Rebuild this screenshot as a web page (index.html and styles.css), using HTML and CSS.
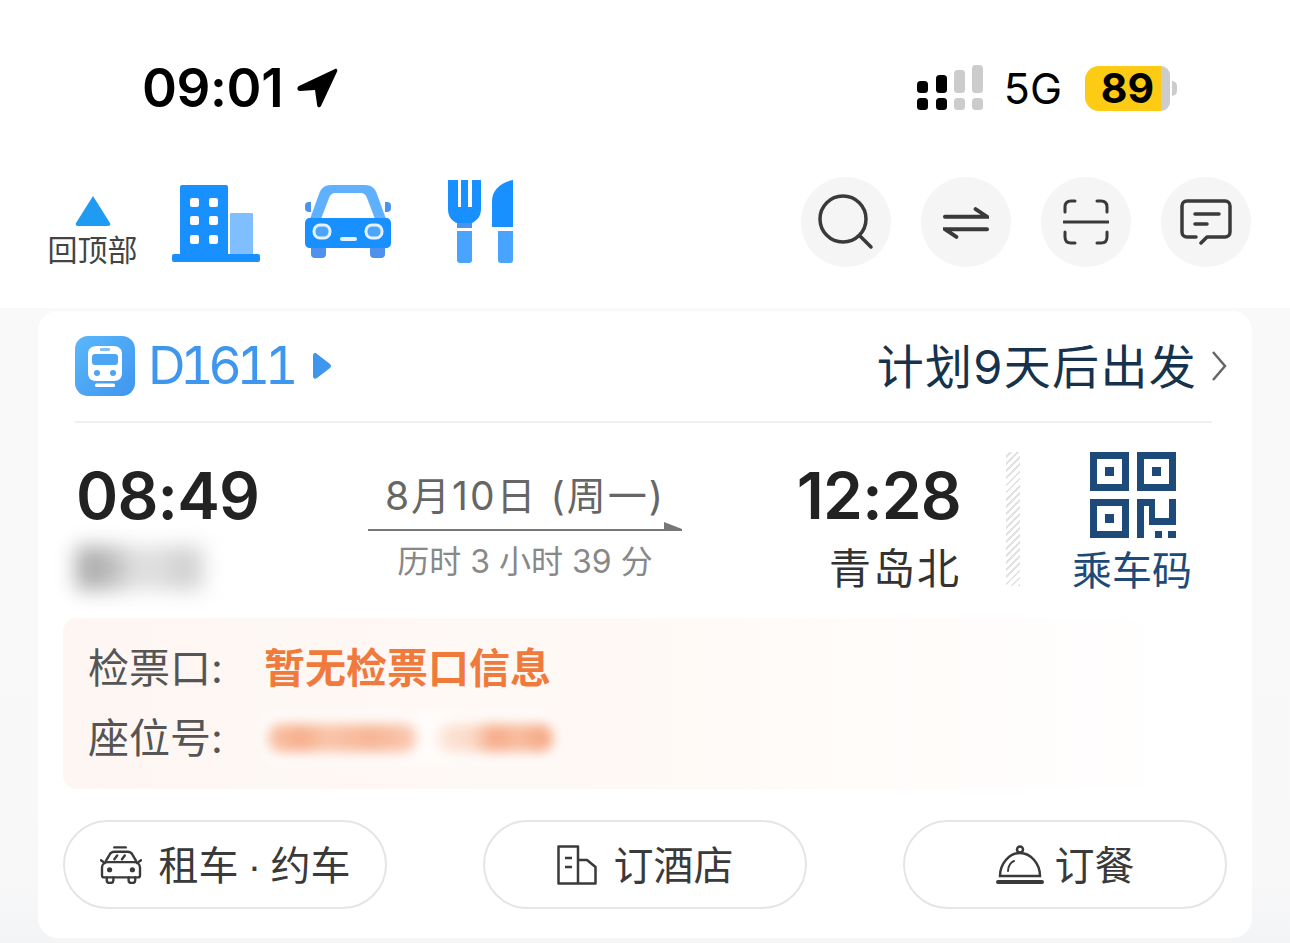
FILE: index.html
```html
<!DOCTYPE html>
<html lang="zh-CN">
<head>
    <meta charset="UTF-8">
    <meta name="viewport" content="width=device-width, initial-scale=1.0">
    <title>行程</title>
    <link rel="stylesheet" href="styles.css">
</head>
<body>
    <div class="status-bar">
        <div class="status-left">
            <span class="clock">09:01</span>
            <svg class="gps" viewBox="0 0 42 42" width="42" height="42"><path d="M2 19 38 2c1.500-.6 2.800.6 2.200 2.200L24 39c-1 2-3.500 1.700-3.800-.6L18 23 3 24c-3 0-3.500-3.600-1-5z" fill="#000"/></svg>
        </div>
        <div class="status-right">
            <svg class="signal" viewBox="0 0 66 46" width="66" height="46">
                <rect x="0" y="16" width="11" height="12" rx="3.500" fill="#000"/><rect x="0" y="33" width="11" height="12" rx="3.500" fill="#000"/>
                <rect x="19" y="10" width="11" height="18" rx="3.500" fill="#000"/><rect x="19" y="33" width="11" height="12" rx="3.500" fill="#000"/>
                <rect x="37" y="5" width="11" height="23" rx="3.500" fill="#ccc"/><rect x="37" y="33" width="11" height="12" rx="3.500" fill="#ccc"/>
                <rect x="55" y="0" width="11" height="28" rx="3.500" fill="#ccc"/><rect x="55" y="33" width="11" height="12" rx="3.500" fill="#ccc"/>
            </svg>
            <span class="network">5G</span>
            <div class="battery"><div class="battery-fill">89</div><div class="battery-rest"></div><div class="battery-tip"></div></div>
        </div>
    </div>

    <div class="nav">
        <div class="back-top">
            <svg viewBox="0 0 36 32" width="36" height="32"><path d="M18 1 35 28c.8 1.500 0 3-2 3H3c-2 0-2.800-1.500-2-3z" fill="#1f9cf2"/></svg>
            <span>回顶部</span>
        </div>
        <svg class="nav-hotel" viewBox="0 0 88 78" width="88" height="78">
            <rect x="8" y="0" width="48" height="72" rx="2" fill="#1890ff"/>
            <rect x="58" y="28" width="23" height="44" rx="1" fill="#7fbfff"/>
            <rect x="0" y="69" width="88" height="8" rx="2" fill="#1890ff"/>
            <g fill="#fff"><rect x="18" y="13" width="9" height="9" rx="2"/><rect x="37" y="13" width="9" height="9" rx="2"/><rect x="18" y="31" width="9" height="9" rx="2"/><rect x="37" y="31" width="9" height="9" rx="2"/><rect x="18" y="50" width="9" height="9" rx="2"/><rect x="37" y="50" width="9" height="9" rx="2"/></g>
        </svg>
        <svg class="nav-car" viewBox="0 0 86 74" width="86" height="74">
            <rect x="6" y="58" width="15" height="15" rx="4" fill="#4d93ee"/><rect x="65" y="58" width="15" height="15" rx="4" fill="#4d93ee"/>
            <rect x="0" y="17" width="86" height="10" rx="4" fill="#4d93ee"/>
            <rect x="0" y="0" width="86" height="17" fill="#fff"/>
            <rect x="6" y="17" width="74" height="17" fill="#fff"/>
            <path d="M5 34 14 9C16 3 20 0 26 0H60c6 0 10 3 12 9L81 34H70L62 13c-1-3-3-5-7-5H31c-4 0-6 2-7 5L16 34z" fill="#5fb1ff"/>
            <path d="M5 33H81c3 0 5 2 5 5V58c0 3-2 5-5 5H5c-3 0-5-2-5-5V38c0-3 2-5 5-5z" fill="#1890ff"/>
            <rect x="9" y="40" width="16" height="13" rx="6" fill="#4aa5fb" stroke="#e4f2ff" stroke-width="3"/>
            <rect x="61" y="40" width="16" height="13" rx="6" fill="#4aa5fb" stroke="#e4f2ff" stroke-width="3"/>
            <rect x="35" y="52" width="17" height="4" rx="2" fill="#e4f2ff"/>
        </svg>
        <svg class="nav-food" viewBox="0 0 68 86" width="68" height="86">
            <path d="M1 1H11V28H14V1H21V28H25V1H34V30C34 38 29 42 25 44H10C5 42 1 38 1 30z" fill="#1890ff"/>
            <path d="M10 44H25V49H10z" fill="#4d93ee"/>
            <path d="M10 52H25V81c0 2-1 3-3 3H13c-2 0-3-1-3-3z" fill="#48a4ff"/>
            <path d="M66 1V48H45V22C45 11 54 3 66 1z" fill="#1890ff"/>
            <path d="M51 52H66V81c0 2-1 3-3 3H54c-2 0-3-1-3-3z" fill="#48a4ff"/>
        </svg>
        <div class="nav-actions">
            <div class="round-btn"><svg viewBox="0 0 56 56" width="56" height="56"><circle cx="25" cy="25" r="23" fill="none" stroke="#3a3a3a" stroke-width="3.500"/><path d="M42 42 53 53" stroke="#3a3a3a" stroke-width="3.500" stroke-linecap="round"/></svg></div>
            <div class="round-btn"><svg viewBox="0 0 48 34" width="46" height="33" fill="none" stroke="#3a3a3a" stroke-width="4" stroke-linecap="round"><path d="M2 11H46L34 3"/><path d="M46 24H2L14 32"/></svg></div>
            <div class="round-btn"><svg viewBox="0 0 46 46" width="46" height="46" fill="none" stroke="#3a3a3a" stroke-width="3" stroke-linecap="round"><path d="M2 13V8c0-4 2-6 6-6h4M34 2h4c4 0 6 2 6 6v5M2 33v5c0 4 2 6 6 6h4M34 44h4c4 0 6-2 6-6v-5M1 23H45"/></svg></div>
            <div class="round-btn"><svg viewBox="0 0 52 46" width="52" height="46" fill="none" stroke="#3a3a3a" stroke-width="3.500" stroke-linecap="round" stroke-linejoin="round"><path d="M16 38H7c-3 0-5-2-5-5V7c0-3 2-5 5-5H45c3 0 5 2 5 5V33c0 3-2 5-5 5H27l-6 6"/><path d="M15 15H39M15 25H27"/></svg></div>
        </div>
    </div>

    <div class="page">
        <div class="card">
            <div class="card-head">
                <svg class="train-logo" viewBox="0 0 60 60" width="60" height="60">
                    <defs><linearGradient id="tg" x1="0" y1="0" x2="1" y2="1"><stop offset="0" stop-color="#5ab8fb"/><stop offset="1" stop-color="#3f95ee"/></linearGradient></defs>
                    <rect width="60" height="60" rx="13" fill="url(#tg)"/>
                    <path d="M22 10H38c6 0 9 3 9 8V37c0 5-3 8-8 8H21c-5 0-8-3-8-8V18c0-5 3-8 9-8z" fill="#fff"/>
                    <rect x="17" y="18" width="26" height="11" rx="3" fill="#4da6f4"/>
                    <rect x="25" y="12" width="10" height="3" rx="1" fill="#7fc0f7"/>
                    <circle cx="22" cy="37" r="3" fill="#4da6f4"/><circle cx="38" cy="37" r="3" fill="#4da6f4"/>
                    <rect x="20" y="47.500" width="20" height="3.500" rx="1.500" fill="#fff"/>
                </svg>
                <span class="train-no">D1611</span>
                <svg class="train-arrow" viewBox="0 0 18 26" width="18" height="26"><path d="M0 3c0-3 2-4 4-2L17 11c1.300 1 1.300 3 0 4L4 25c-2 1.500-4 .5-4-2z" fill="#3e96ee"/></svg>
                <span class="plan">计划9天后出发</span>
                <svg class="chevron" viewBox="0 0 16 32" width="16" height="32"><path d="M2 2 14 16 2 30" fill="none" stroke="#666" stroke-width="2.500"/></svg>
            </div>

            <div class="trip">
                <div class="depart">
                    <div class="time">08:49</div>
                    <div class="smudge"></div>
                </div>
                <div class="middle">
                    <div class="date">8月10日 (周一)</div>
                    <div class="arrow-line"></div>
                    <div class="duration">历时 3 小时 39 分</div>
                </div>
                <div class="arrive">
                    <div class="time">12:28</div>
                    <div class="station">青岛北</div>
                </div>
                <div class="hatch"></div>
                <div class="ticket-code">
                    <svg viewBox="0 0 86 86" width="86" height="86" fill="#1d4a78">
                        <path fill-rule="evenodd" d="M0 0H39V39H0zM7 7V32H32V7z"/><rect x="15" y="15" width="9" height="9"/>
                        <path fill-rule="evenodd" d="M47 0H86V39H47zM54 7V32H79V7z"/><rect x="62" y="15" width="9" height="9"/>
                        <path fill-rule="evenodd" d="M0 47H39V86H0zM7 54V79H32V54z"/><rect x="15" y="62" width="9" height="9"/>
                        <path d="M47 47H65V66H79V47H86V73H59V54H54V86H47z"/><rect x="65" y="79" width="7" height="7"/><rect x="78" y="79" width="8" height="7"/>
                    </svg>
                    <span>乘车码</span>
                </div>
            </div>

            <div class="gate-box">
                <div class="gate-row">
                    <span class="gate-label">检票口:</span>
                    <span class="gate-value">暂无检票口信息</span>
                </div>
                <div class="gate-row">
                    <span class="gate-label">座位号:</span>
                    <div class="seat-smudge"><i class="blob-a"></i><i class="blob-b"></i></div>
                </div>
            </div>

            <div class="actions">
                <div class="pill">
                    <svg viewBox="0 0 44 40" width="42" height="38" fill="none" stroke="#3a3a3a" stroke-width="2.500" stroke-linecap="round" stroke-linejoin="round"><path d="M15 1.500H27"/><path d="M6 16 10 9c1-2 3-3 5-3H29c2 0 4 1 5 3L38 16"/><path d="M1 15 5 18M43 15 39 18"/><path d="M4 33H40c1.500 0 2-1 2-2V23c0-4-3-6-6-6H8c-3 0-6 2-6 6v8c0 1 .5 2 2 2z"/><path d="M7 33v3c0 4 7 4 7 0v-3M30 33v3c0 4 7 4 7 0v-3"/><path d="M15 14 18 10M23 14 26 10"/><circle cx="10" cy="25" r="1.500" fill="#3a3a3a"/><circle cx="34" cy="25" r="1.500" fill="#3a3a3a"/></svg>
                    <span class="pill-text">租车<span class="dot">·</span>约车</span>
                </div>
                <div class="pill">
                    <svg viewBox="0 0 40 40" width="40" height="40" fill="none" stroke="#3a3a3a" stroke-width="2.500" stroke-linejoin="round"><path d="M1.500 38.500V1.500H21V38.500zM21 38.500H38.500V22L30 15H21"/><path d="M8 13H15M8 22H15"/></svg>
                    <span class="pill-text">订酒店</span>
                </div>
                <div class="pill pill-tight">
                    <svg viewBox="0 0 48 40" width="48" height="40" fill="none" stroke="#3a3a3a" stroke-linecap="round"><circle cx="24" cy="4.500" r="3" stroke-width="2.500"/><path d="M4 31C4 19 13 8 24 8s20 11 20 23z" stroke-width="2.500"/><path d="M12 26c0-5 3-9 6-10" stroke-width="2"/><path d="M2 37H46" stroke-width="4"/></svg>
                    <span class="pill-text">订餐</span>
                </div>
            </div>
        </div>
    </div>
</body>
</html>
```
FILE: styles.css
```css
* {
    box-sizing: border-box;
}
html, body {
    margin: 0;
    height: 943px;
    overflow: hidden;
}
body {
    background: #fff;
    font-family: Inter, "Noto Sans CJK SC", sans-serif;
    color: #333;
}
svg {
    display: block;
    flex: none;
}

/* status bar */
.status-bar {
    height: 170px;
    padding: 6px 113px 0 142px;
    display: flex;
    justify-content: space-between;
    align-items: center;
}
.status-left {
    display: flex;
    align-items: center;
    gap: 14px;
}
.clock {
    font-size: 53px;
    font-weight: 600;
    letter-spacing: -.4px;
    color: #000;
    line-height: 1;
}
.status-right {
    display: flex;
    align-items: center;
}
.network {
    margin-left: 21px;
    font-size: 43px;
    font-weight: 400;
    color: #000;
    line-height: 1;
}
.battery {
    margin-left: 23px;
    display: flex;
    align-items: center;
}
.battery-fill {
    width: 76px;
    height: 45px;
    background: #fdcb14;
    border-radius: 14px 0 0 14px;
    font-size: 41px;
    font-weight: 700;
    color: #000;
    text-align: center;
    line-height: 45px;
    padding-left: 9px;
}
.battery-rest {
    width: 9px;
    height: 45px;
    background: #ccc;
    border-radius: 0 12px 12px 0;
}
.battery-tip {
    margin-left: 2px;
    width: 5px;
    height: 15px;
    background: #ccc;
    border-radius: 0 5px 5px 0;
}

/* nav */
.nav {
    height: 138px;
    padding: 0 39px 34px 48px;
    display: flex;
    align-items: center;
}
.back-top {
    width: 89px;
    display: flex;
    flex-direction: column;
    align-items: center;
    margin-top: 19px;
}
.back-top svg {
    margin-bottom: 4px;
}
.back-top span {
    font-size: 30px;
    line-height: 38px;
    color: #444;
    white-space: nowrap;
}
.nav-hotel {
    margin-left: 35px;
    margin-top: 3px;
}
.nav-car {
    margin-left: 45px;
}
.nav-food {
    margin-left: 56px;
}
.nav-actions {
    margin-left: auto;
    display: flex;
    gap: 30px;
}
.round-btn {
    width: 90px;
    height: 90px;
    border-radius: 50%;
    background: #f5f5f5;
    display: flex;
    align-items: center;
    justify-content: center;
}

/* card */
.page {
    height: 635px;
    background: linear-gradient(#f9f9f9, #f8f8f9 90%, #f3f4f6);
    padding: 3px 38px 0;
}
.card {
    height: 627px;
    background: #fff;
    border-radius: 20px;
    padding: 26px 26px 0 25px;
}
.card-head {
    height: 86px;
    margin: 0 14px 0 12px;
    padding-bottom: 26px;
    border-bottom: 2px solid #f0f0f0;
    display: flex;
    align-items: center;
}
.train-no {
    margin-left: 13px;
    font-size: 52px;
    font-variant-numeric: tabular-nums;
    color: #3e96ee;
    letter-spacing: -5.500px;
    line-height: 1;
}
.train-arrow {
    margin-left: 20px;
}
.plan {
    margin-left: auto;
    margin-right: 14px;
    font-size: 47px;
    letter-spacing: 1.300px;
    color: #17324d;
    line-height: 1;
    white-space: nowrap;
}
.chevron {
    margin-right: -15px;
}

/* trip */
.trip {
    display: flex;
    height: 195px;
    padding: 30px 0 0 13px;
}
.depart {
    width: 292px;
}
.time {
    font-size: 64px;
    font-weight: 600;
    color: #222;
    line-height: 86px;
    letter-spacing: -.8px;
    height: 86px;
}
.smudge {
    margin: 7px 0 0 0;
    width: 130px;
    height: 44px;
    filter: blur(10px);
    background: linear-gradient(90deg, #a8a8a8, #b8b8b8 25%, #e0e0e0 45%, #dcdcdc 70%, #ccc 85%, #e8e8e8);
}
.middle {
    width: 314px;
    text-align: center;
}
.date {
    font-size: 39px;
    letter-spacing: 2px;
    color: #666;
    line-height: 50px;
    margin-top: 18px;
    white-space: nowrap;
}
.arrow-line {
    height: 2px;
    background: #777;
    margin-top: 8px;
    position: relative;
}
.arrow-line::after {
    content: "";
    position: absolute;
    right: 0;
    top: -7px;
    border-left: 18px solid #777;
    border-top: 7px solid transparent;
    border-bottom: 2px solid transparent;
}
.duration {
    font-size: 32px;
    color: #888;
    line-height: 44px;
    margin-top: 9px;
    white-space: nowrap;
}
.arrive {
    width: 279px;
    text-align: right;
}
.station {
    font-size: 42px;
    color: #333;
    line-height: 60px;
    letter-spacing: 2px;
}
.hatch {
    margin-left: 45px;
    margin-top: -1px;
    width: 14px;
    height: 134px;
    background: repeating-linear-gradient(-45deg, #e2e2e2 0 2px, #fff 2px 5px);
}
.ticket-code {
    margin-left: 52px;
    margin-top: -1px;
    display: flex;
    flex-direction: column;
    align-items: center;
    width: 120px;
}
.ticket-code svg {
    margin-left: 2px;
}
.ticket-code span {
    font-size: 40px;
    line-height: 66px;
    color: #1d4a78;
    white-space: nowrap;
}

/* gate box */
.gate-box {
    height: 171px;
    width: 1150px;
    background: linear-gradient(90deg, #fdf6f2, #fff9f6 50%, #fff);
    border-radius: 14px;
    padding: 15px 0 0 25px;
}
.gate-row {
    display: flex;
    align-items: center;
    height: 70px;
}
.gate-label {
    width: 176px;
    font-size: 41px;
    color: #555;
    line-height: 1;
}
.gate-value {
    font-size: 41px;
    font-weight: 600;
    color: #f07a3c;
    line-height: 1;
    white-space: nowrap;
}
.seat-smudge {
    width: 300px;
    height: 54px;
    margin-left: -6px;
    display: flex;
    align-items: center;
    padding-left: 10px;
    background: rgba(255, 255, 255, .6);
    border-radius: 20px;
    filter: blur(6px);
}
.seat-smudge i {
    display: block;
    height: 28px;
    border-radius: 12px;
}
.blob-a {
    width: 148px;
    background: linear-gradient(90deg, #f9c5aa, #f6ae8c 22%, #f9c5aa 40%, #f7b595 70%, #f9c9b0);
}
.blob-b {
    width: 115px;
    margin-left: 22px;
    background: linear-gradient(90deg, #fde6da, #fbd9c8 30%, #f6ab88 48%, #f8bd9f 70%, #f6ab88 90%);
}

/* buttons */
.actions {
    margin-top: 31px;
    width: 1164px;
    display: flex;
    justify-content: space-between;
}
.pill {
    width: 324px;
    height: 89px;
    border: 2px solid #e5e5e5;
    border-radius: 45px;
    display: flex;
    align-items: center;
    justify-content: center;
    gap: 17px;
    font-size: 40px;
    color: #3a3a3a;
}
.pill-tight {
    gap: 11px;
}
.pill-text {
    margin-bottom: 4px;
}
.dot {
    display: inline-block;
    width: 32px;
    text-align: center;
    font-family: "Liberation Sans", sans-serif;
}
```
